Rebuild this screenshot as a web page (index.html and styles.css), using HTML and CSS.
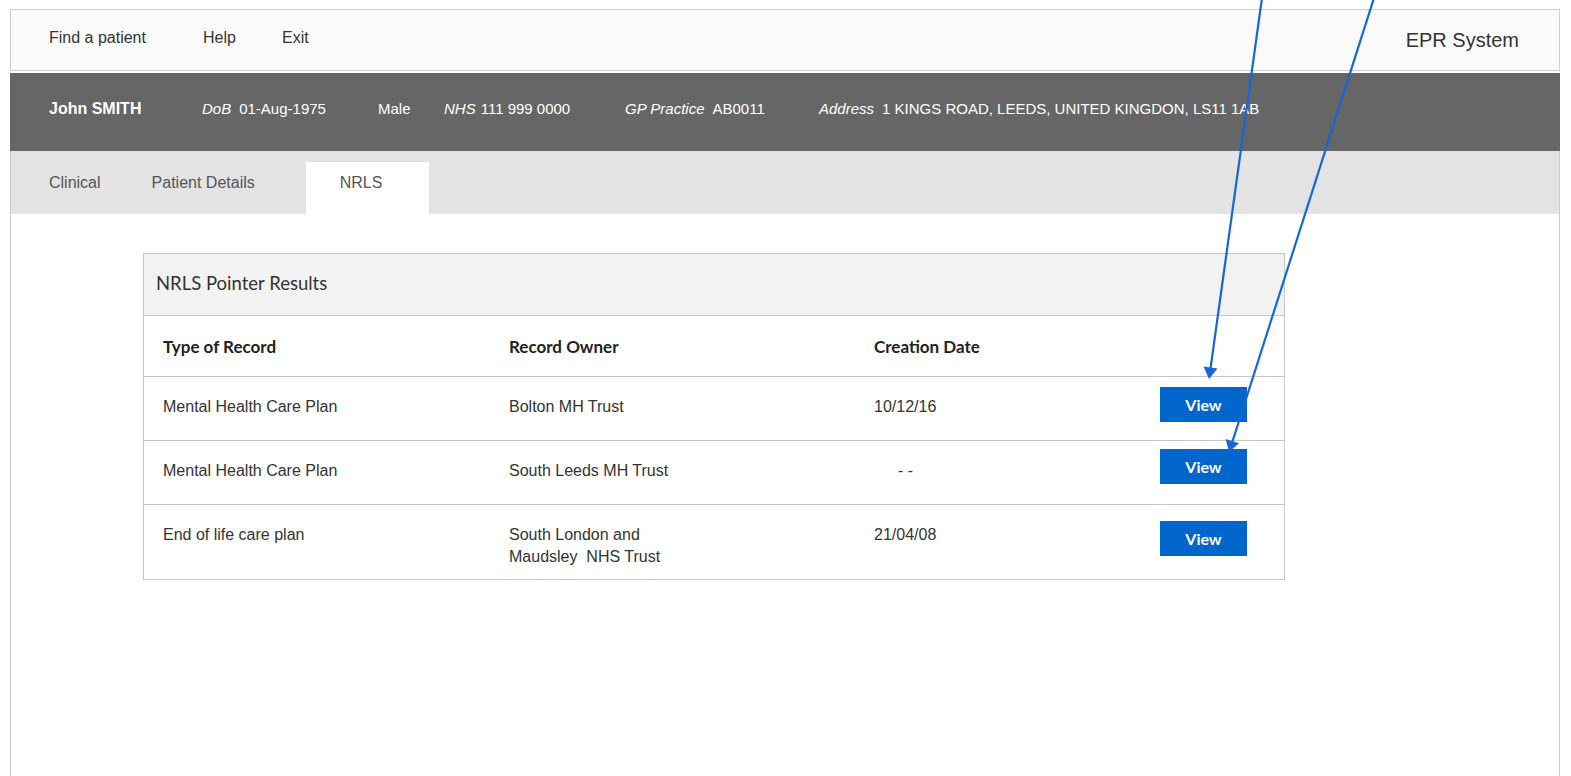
FILE: index.html
```html
<!DOCTYPE html>
<html lang="en">
<head>
<meta charset="utf-8">
<title>EPR System - NRLS</title>
<link rel="stylesheet" href="styles.css">
</head>
<body>
<div class="app">
  <header class="topbar">
    <nav class="topnav">
      <a class="topnav__link" href="#">Find a patient</a>
      <a class="topnav__link" href="#">Help</a>
      <a class="topnav__link" href="#">Exit</a>
    </nav>
    <div class="brand">EPR System</div>
  </header>

  <section class="patient-banner">
    <div class="patient-banner__name">John SMITH</div>
    <div class="patient-banner__item"><span class="label">DoB</span>01-Aug-1975</div>
    <div class="patient-banner__item">Male</div>
    <div class="patient-banner__item"><span class="label label--tight">NHS</span>111 999 0000</div>
    <div class="patient-banner__item"><span class="label">GP Practice</span>AB0011</div>
    <div class="patient-banner__item"><span class="label">Address</span>1 KINGS ROAD, LEEDS, UNITED KINGDON, LS11 1AB</div>
  </section>

  <div class="workspace">
    <div class="tabs">
      <a class="tab" href="#">Clinical</a>
      <a class="tab" href="#">Patient Details</a>
      <a class="tab tab--active" href="#">NRLS</a>
    </div>

    <main class="content">
      <div class="card">
        <div class="card__head">NRLS Pointer Results</div>
        <div class="grid-row grid-row--head">
          <div class="cell">Type of Record</div>
          <div class="cell">Record Owner</div>
          <div class="cell">Creation Date</div>
          <div class="cell"></div>
        </div>
        <div class="grid-row">
          <div class="cell">Mental Health Care Plan</div>
          <div class="cell">Bolton MH Trust</div>
          <div class="cell">10/12/16</div>
          <div class="cell cell--action"><button class="btn">View</button></div>
        </div>
        <div class="grid-row">
          <div class="cell">Mental Health Care Plan</div>
          <div class="cell">South Leeds MH Trust</div>
          <div class="cell cell--empty">- -</div>
          <div class="cell cell--action cell--action-up"><button class="btn">View</button></div>
        </div>
        <div class="grid-row grid-row--last">
          <div class="cell">End of life care plan</div>
          <div class="cell cell--owner">South London and<br>Maudsley&nbsp; NHS Trust</div>
          <div class="cell">21/04/08</div>
          <div class="cell cell--action cell--action-low"><button class="btn">View</button></div>
        </div>
      </div>
    </main>
  </div>

  <svg class="annotations" width="1571" height="776" viewBox="0 0 1571 776" aria-hidden="true">
    <line x1="1262" y1="-2" x2="1210.3" y2="370" class="annotations__line"/>
    <polygon points="1209,379 1217.5,368.6 1203.6,366.6" class="annotations__head"/>
    <line x1="1374" y1="-2" x2="1232" y2="443" class="annotations__line"/>
    <polygon points="1229,452 1239,443.3 1225.7,439" class="annotations__head"/>
  </svg>
</div>
</body>
</html>
```
FILE: styles.css
```css
* { box-sizing: border-box; }

html, body {
  margin: 0;
  padding: 0;
  background: #ffffff;
}

body {
  font-family: "Liberation Sans", Arial, sans-serif;
  color: #333333;
  overflow: hidden;
}

.app {
  position: relative;
  padding: 9px 11px 0 10px;
  height: 776px;
  display: flex;
  flex-direction: column;
}

/* Top bar */
.topbar {
  flex: none;
  height: 62px;
  border: 1px solid #cccccc;
  background: #fafafa;
  display: flex;
  align-items: center;
  justify-content: space-between;
  padding: 0 40px 0 38px;
  margin-bottom: 2px;
}

.topnav {
  display: grid;
  grid-template-columns: 154px 79px auto;
  padding-bottom: 5px;
}

.topnav__link {
  font-size: 16px;
  color: #333333;
  text-decoration: none;
}

.brand {
  font-size: 20px;
  color: #333333;
  padding-top: 1px;
}

/* Patient banner */
.patient-banner {
  flex: none;
  height: 78px;
  background: #666666;
  color: #ffffff;
  display: grid;
  grid-template-columns: 153px 176px 66px 181px 194px auto;
  align-items: center;
  padding: 0 0 7px 39px;
  font-size: 15px;
}

.patient-banner__name {
  font-weight: bold;
  font-size: 16px;
}

.label {
  font-style: italic;
  margin-right: 8px;
}

.label--tight { margin-right: 5px; }

/* Workspace */
.workspace {
  flex: 1;
  display: flex;
  flex-direction: column;
  border-left: 1px solid #cccccc;
  border-right: 1px solid #cccccc;
}

.tabs {
  flex: none;
  height: 63px;
  background: #e3e3e3;
  display: flex;
  align-items: flex-end;
  gap: 51px;
  padding-left: 38px;
}

.tab {
  height: 52px;
  display: flex;
  align-items: center;
  padding-bottom: 10px;
  font-size: 16px;
  color: #555555;
  text-decoration: none;
}

.tab--active {
  background: #ffffff;
  padding: 0 47px 10px 34px;
}

.content {
  flex: 1;
  padding: 39px 0 0 132px;
  background: #ffffff;
}

/* Card */
.card {
  width: 1142px;
  border: 1px solid #c6c6c6;
  background: #ffffff;
}

.card__head {
  height: 62px;
  background: #f2f2f2;
  border-bottom: 1px solid #c6c6c6;
  display: flex;
  align-items: center;
  padding: 0 0 3px 12px;
  font-family: Lato, "Open Sans", sans-serif;
  font-size: 18.5px;
  color: #333333;
}

.grid-row {
  display: grid;
  grid-template-columns: 346px 365px 286px 87px;
  padding: 0 0 11px 19px;
  min-height: 64px;
  border-bottom: 1px solid #c6c6c6;
  font-size: 16px;
  line-height: 22px;
  color: #333333;
}

.grid-row--head {
  min-height: 61px;
  font-family: Lato, "Open Sans", sans-serif;
  font-weight: bold;
  font-size: 17px;
  color: #222222;
}

.grid-row--head .cell { padding-top: 20px; }

.grid-row--last {
  border-bottom: none;
  min-height: 74px;
}

.cell { padding-top: 19px; }

.cell--empty { padding-left: 24px; }

.cell--action { padding-top: 10px; }
.cell--action-up { padding-top: 8px; }
.cell--action-low { padding-top: 16px; }

.btn {
  display: block;
  width: 87px;
  height: 35px;
  border: none;
  background: #0066cc;
  color: #ffffff;
  font-family: Lato, "Open Sans", sans-serif;
  font-weight: bold;
  font-size: 16px;
  padding: 0;
  cursor: pointer;
}

/* Annotation arrows */
.annotations {
  position: absolute;
  top: 0;
  left: 0;
  pointer-events: none;
}

.annotations__line {
  stroke: #1567d8;
  stroke-width: 2.2;
}

.annotations__head {
  fill: #1567d8;
}
```
